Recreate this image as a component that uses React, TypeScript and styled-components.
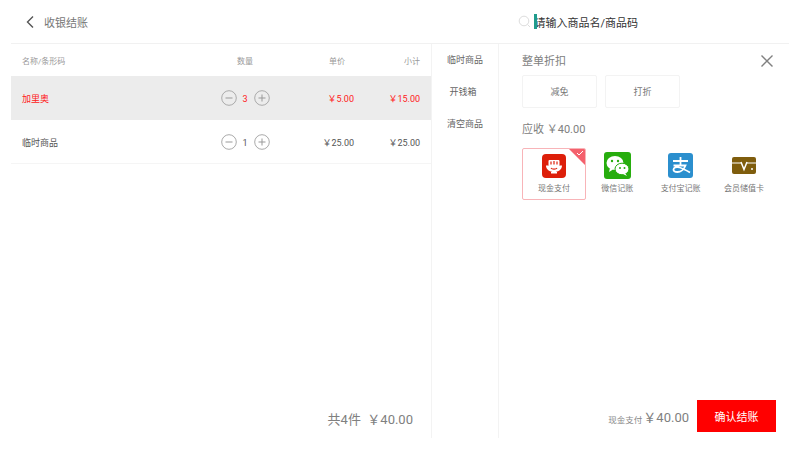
import React from "react";
import styled, { createGlobalStyle } from "styled-components";

const Global = createGlobalStyle`
  html, body { margin: 0; padding: 0; background: #fff; }
  body { font-family: Roboto, "Noto Sans CJK SC", sans-serif; color: #666; }
  * { box-sizing: border-box; }
`;

const Page = styled.div`
  width: 800px;
  height: 450px;
  padding: 0 11px 12px;
  display: flex;
  flex-direction: column;
  overflow: hidden;
`;

const Header = styled.header`
  height: 44px;
  flex: none;
  display: flex;
  align-items: center;
  border-bottom: 1px solid #f1f1f1;
`;

const Back = styled.div`
  width: 216px;
  padding-left: 14px;
  display: flex;
  align-items: center;
  gap: 9px;
  font-size: 11px;
  color: #777;
`;

const Search = styled.div`
  margin-left: 291px;
  display: flex;
  align-items: center;
  font-size: 11px;
  color: #333;
`;

const Caret = styled.span`
  width: 2.5px;
  height: 15px;
  background: #1f9c8c;
  margin: 0 -2px 0 3px;
  z-index: 1;
`;

const Body = styled.div`
  flex: 1;
  display: flex;
  min-height: 0;
`;

const Left = styled.section`
  width: 421px;
  display: flex;
  flex-direction: column;
  border-right: 1px solid #f3f3f3;
`;

const cols = `
  display: grid;
  grid-template-columns: 186px 74px 72px 66px;
  padding-left: 11px;
  align-items: center;
`;

const HeadRow = styled.div`
  ${cols}
  height: 32px;
  font-size: 8px;
  color: #999;
`;

const Row = styled.div<{ $active?: boolean }>`
  ${cols}
  height: 44px;
  font-size: 9px;
  background: ${(p) => (p.$active ? "#ececec" : "#fff")};
  color: ${(p) => (p.$active ? "#ff2020" : "#555")};
  border-bottom: ${(p) => (p.$active ? "none" : "1px solid #f5f5f5")};
  padding-top: ${(p) => (p.$active ? "0" : "1px")};
`;

const Center = styled.div`
  text-align: center;
`;

const Right = styled.div<{ $inset?: boolean }>`
  text-align: right;
  padding-right: ${(p) => (p.$inset ? "9px" : "0")};
`;

const Qty = styled.div`
  display: flex;
  align-items: center;
  justify-content: center;
  gap: 5.5px;
`;

const QtyNum = styled.span`
  width: 6px;
  padding-top: 1px;
  text-align: center;
`;

const Total = styled.div`
  margin-top: auto;
  height: 39px;
  padding-right: 18px;
  text-align: right;
  font-size: 13px;
  color: #808080;
  line-height: 42px;
`;

const Mid = styled.nav`
  width: 67px;
  display: flex;
  flex-direction: column;
  align-items: center;
  padding-top: 9px;
  gap: 18px;
  font-size: 9px;
  line-height: 14px;
  color: #666;
  border-right: 1px solid #f3f3f3;
`;

const MidItem = styled.div<{ $nudge?: boolean }>`
  margin-right: ${(p) => (p.$nudge ? "4px" : "0")};
`;

const Pay = styled.section`
  flex: 1;
  padding: 10px 0 0 23px;
  display: flex;
  flex-direction: column;
  position: relative;
`;

const Title = styled.div`
  font-size: 11px;
  line-height: 16px;
  color: #808080;
`;

const Close = styled.div`
  position: absolute;
  top: 9px;
  right: 15px;
  width: 14px;
  height: 14px;
`;

const Discounts = styled.div`
  display: flex;
  gap: 8px;
  margin-top: 5px;
  margin-bottom: 14px;
`;

const Discount = styled.div`
  width: 75px;
  height: 33px;
  border: 1px solid #f3f3f3;
  border-radius: 2px;
  display: flex;
  align-items: center;
  justify-content: center;
  font-size: 9px;
  color: #777;
`;

const Methods = styled.div`
  display: flex;
  margin-top: 10px;
`;

const Method = styled.div<{ $selected?: boolean }>`
  position: relative;
  width: 64px;
  height: 52px;
  margin-right: -0.7px;
  border: 1px solid ${(p) => (p.$selected ? "#f8b4b8" : "transparent")};
  border-radius: 2px;
  display: flex;
  flex-direction: column;
  align-items: center;
  padding-top: 3px;
  font-size: 8px;
  line-height: 12px;
  color: #777;
  gap: 4px;
  overflow: hidden;
`;

const MethodIcon = styled.div`
  height: 27px;
  display: flex;
  align-items: center;
  justify-content: center;
`;

const Corner = styled.div`
  position: absolute;
  top: 0;
  right: 0;
  width: 0;
  height: 0;
  border-top: 16px solid #f4616d;
  border-left: 16px solid transparent;
`;

const Tick = styled.svg`
  position: absolute;
  top: 1px;
  right: 1px;
`;

const Footer = styled.div`
  margin-top: auto;
  margin-bottom: 6px;
  display: flex;
  align-items: center;
  justify-content: flex-end;
  padding-right: 13px;
`;

const PayLabel = styled.span`
  font-size: 8.5px;
  color: #888;
  margin-right: 1px;
  padding-top: 5px;
`;

const PayAmount = styled.span`
  font-size: 13px;
  color: #808080;
  margin-right: 8px;
`;

const Confirm = styled.button`
  width: 79px;
  height: 32px;
  border: none;
  padding: 0;
  background: #ff0000;
  color: #fff;
  font: inherit;
  font-size: 11px;
`;

const Round = ({ plus }: { plus?: boolean }) => (
  <svg width="16" height="16" viewBox="0 0 16 16" fill="none" stroke="#aaa">
    <circle cx="8" cy="8" r="7.3" />
    <path d="M4.5 8h7" stroke="#999" />
    {plus && <path d="M8 4.5v7" stroke="#999" />}
  </svg>
);

const rows = [
  { name: "加里奥", qty: 3, price: "￥5.00", sum: "￥15.00", active: true },
  { name: "临时商品", qty: 1, price: "￥25.00", sum: "￥25.00", active: false },
];

export default function App() {
  return (
    <Page>
      <Global />
      <Header>
        <Back>
          <svg width="10" height="14" viewBox="0 0 10 14" fill="none" stroke="#555" strokeWidth="1.4">
            <path d="M8 1.5 2.5 7 8 12.5" />
          </svg>
          收银结账
        </Back>
        <Search>
          <svg width="13" height="13" viewBox="0 0 13 13" fill="none" stroke="#ddd">
            <circle cx="6" cy="6" r="4.8" />
            <path d="m9.5 9.5 2.5 2.5" />
          </svg>
          <Caret />
          请输入商品名/商品码
        </Search>
      </Header>
      <Body>
        <Left>
          <HeadRow>
            <div>名称/条形码</div>
            <Center>数量</Center>
            <Right $inset>单价</Right>
            <Right>小计</Right>
          </HeadRow>
          {rows.map((r) => (
            <Row key={r.name} $active={r.active}>
              <div>{r.name}</div>
              <Qty>
                <Round />
                <QtyNum>{r.qty}</QtyNum>
                <Round plus />
              </Qty>
              <Right>{r.price}</Right>
              <Right>{r.sum}</Right>
            </Row>
          ))}
          <Total>共4件&nbsp;&nbsp;￥40.00</Total>
        </Left>
        <Mid>
          <MidItem>临时商品</MidItem>
          <MidItem $nudge>开钱箱</MidItem>
          <MidItem>清空商品</MidItem>
        </Mid>
        <Pay>
          <Title>整单折扣</Title>
          <Close>
            <svg width="14" height="14" viewBox="0 0 14 14" fill="none" stroke="#808080" strokeWidth="1.4">
              <path d="m1.5 1.5 11 11M12.5 1.5l-11 11" />
            </svg>
          </Close>
          <Discounts>
            <Discount>减免</Discount>
            <Discount>打折</Discount>
          </Discounts>
          <Title>应收 ￥40.00</Title>
          <Methods>
            <Method $selected>
              <Corner />
              <Tick width="8" height="6" viewBox="0 0 8 6" fill="none" stroke="#fff">
                <path d="m1 3 2 2 4-4" />
              </Tick>
              <MethodIcon>
                <svg width="24" height="24" viewBox="0 0 24 24">
                  <rect width="24" height="24" rx="4" fill="#dd1f0a" />
                  <rect x="6.5" y="6" width="11" height="6" rx="1" fill="#fff" />
                  <path d="M9 7.5v3M12 7v3.5M15 7.5v3" stroke="#dd1f0a" strokeWidth="1.2" />
                  <path d="M4 11.5h16c0 4-3.5 6.5-8 6.5s-8-2.5-8-6.5z" fill="#fff" />
                  <path d="M9 14c1 1.5 5 1.5 6 0" fill="none" stroke="#dd1f0a" strokeWidth="1.2" />
                  <rect x="9" y="18" width="6" height="1.5" fill="#fff" />
                </svg>
              </MethodIcon>
              现金支付
            </Method>
            <Method>
              <MethodIcon>
                <svg width="27" height="27" viewBox="0 0 27 27">
                  <rect width="27" height="27" rx="3" fill="#27ad0e" />
                  <ellipse cx="11" cy="11" rx="8.5" ry="7" fill="#fff" />
                  <path d="M6 16l-1 4 4-2.5z" fill="#fff" />
                  <ellipse cx="18" cy="17" rx="7" ry="5.8" fill="#fff" stroke="#27ad0e" strokeWidth="1" />
                  <path d="M21 21l2 3-4-2z" fill="#fff" />
                  <circle cx="8" cy="9" r="1.2" fill="#27ad0e" />
                  <circle cx="14" cy="9" r="1.2" fill="#27ad0e" />
                  <circle cx="16" cy="16" r="1" fill="#27ad0e" />
                  <circle cx="20.5" cy="16" r="1" fill="#27ad0e" />
                </svg>
              </MethodIcon>
              微信记账
            </Method>
            <Method>
              <MethodIcon>
                <svg width="25" height="25" viewBox="0 0 25 25">
                  <rect width="25" height="25" rx="3" fill="#2b8fce" />
                  <path
                    d="M5 8h15M12.5 4v8M5.5 12.5h12c-1.5 4-5 6.5-8 6.5-2.5 0-4-1-4-2.5 0-2 3-3 6-2 3 .8 7 3 10.5 5"
                    fill="none"
                    stroke="#fff"
                    strokeWidth="1.8"
                  />
                </svg>
              </MethodIcon>
              支付宝记账
            </Method>
            <Method>
              <MethodIcon>
                <svg width="24" height="17" viewBox="0 0 24 17">
                  <rect width="24" height="17" rx="2" fill="#7f5d0d" />
                  <path d="M0 6h9M15 6h9" stroke="#fff" />
                  <path d="M9 5l3 7.5 3-7.5" fill="none" stroke="#fff" strokeWidth="1.5" />
                  <circle cx="20" cy="12" r="1" fill="#fff" />
                </svg>
              </MethodIcon>
              会员储值卡
            </Method>
          </Methods>
          <Footer>
            <PayLabel>现金支付</PayLabel>
            <PayAmount>￥40.00</PayAmount>
            <Confirm>确认结账</Confirm>
          </Footer>
        </Pay>
      </Body>
    </Page>
  );
}
